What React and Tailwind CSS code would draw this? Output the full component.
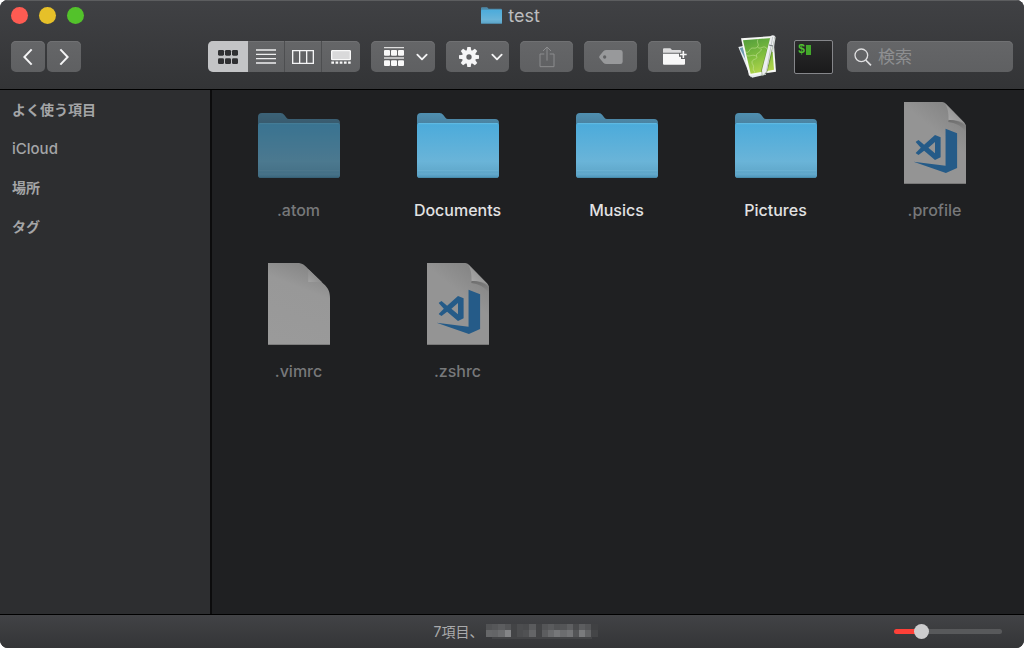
import React from 'react'

const FONT = "font-['Inter','Noto_Sans_CJK_JP',sans-serif]"

function FolderIcon({ className }) {
  return (
    <svg viewBox="0 0 246 195" className={className} aria-hidden="true">
      <defs>
        <linearGradient id="folderFront" x1="0" y1="0" x2="0" y2="1">
          <stop offset="0" stopColor="#4babdb" />
          <stop offset="0.7" stopColor="#6ab4d8" />
          <stop offset="0.86" stopColor="#62aacd" />
          <stop offset="1" stopColor="#559dc1" />
        </linearGradient>
        <linearGradient id="folderBack" x1="0" y1="0" x2="0" y2="1">
          <stop offset="0" stopColor="#4f8fb0" />
          <stop offset="0.3" stopColor="#4a83a2" />
        </linearGradient>
      </defs>
      <path d="M0 12Q0 0 12 0H68Q75 0 79 6L86 15Q88 18 93 18H234Q246 18 246 30V100H0Z" fill="url(#folderBack)" />
      <path d="M0 38Q0 30 8 30H238Q246 30 246 38V187Q246 195 238 195H8Q0 195 0 187Z" fill="url(#folderFront)" />
      <path d="M4 32H242" stroke="#62bce4" strokeWidth="3" />
      <path d="M2 173H244M2 183H244" stroke="#7fc0de" strokeWidth="2" opacity="0.55" />
      <path d="M4 193H242" stroke="#4788a8" strokeWidth="3" />
    </svg>
  )
}

function PlainFile() {
  return (
    <svg viewBox="0 0 188 246" className="h-[82px] w-[62px]" preserveAspectRatio="none" aria-hidden="true">
      <defs>
        <linearGradient id="plainFold" x1="0" y1="1" x2="0.6" y2="0.3">
          <stop offset="0" stopColor="#a3a3a3" />
          <stop offset="1" stopColor="#878787" />
        </linearGradient>
        <linearGradient id="paperPlain" x1="0.3" y1="1" x2="0.6" y2="0">
          <stop offset="0" stopColor="#9a9a9a" />
          <stop offset="0.7" stopColor="#989898" />
          <stop offset="1" stopColor="#858585" />
        </linearGradient>
      </defs>
      <path d="M0 0H88C106 0 113 8 122 18L168 62C183 75 188 86 188 106V246H0Z" fill="url(#paperPlain)" />
      <path d="M122 18V57H163Z" fill="url(#plainFold)" />
      <path d="M0 244.500H188" stroke="#7d7d7d" strokeWidth="3" />
    </svg>
  )
}

function CodeFile() {
  return (
    <svg viewBox="0 0 188 246" className="h-[82px] w-[62px]" preserveAspectRatio="none" aria-hidden="true">
      <defs>
        <linearGradient id="codeFold" x1="0" y1="1" x2="0.7" y2="0.3">
          <stop offset="0" stopColor="#b0b0b0" />
          <stop offset="1" stopColor="#909090" />
        </linearGradient>
        <linearGradient id="foldShade" x1="0.4" y1="0" x2="0.6" y2="1">
          <stop offset="0" stopColor="#6e6e6e" />
          <stop offset="1" stopColor="#6e6e6e" stopOpacity="0" />
        </linearGradient>
        <linearGradient id="paperCode" x1="0" y1="1" x2="0.6" y2="0">
          <stop offset="0" stopColor="#949494" />
          <stop offset="0.7" stopColor="#949494" />
          <stop offset="1" stopColor="#868686" />
        </linearGradient>
      </defs>
      <path d="M0 0H116Q122 0 128 6L182 61Q188 67 188 76V246H0Z" fill="url(#paperCode)" />
      <path d="M136 52C155 54 176 60 188 74V92C176 72 155 62 134 60Z" fill="url(#foldShade)" />
      <path d="M122 2C133 14 136 34 135 54C155 53 174 56 186 66Z" fill="url(#codeFold)" />
      <path d="M0 244.500H188" stroke="#787878" strokeWidth="3" />
      <path d="M126 80L161 94V198L127 213L29 179L126 191Z" fill="#255b88" />
      <path
        fillRule="evenodd"
        d="M94 99L111 106V166L94 174L61 146L44 159L36 154V152L51 137L36 121V119L44 114L61 128ZM94 120L74 137L94 154Z"
        fill="#255b88"
      />
    </svg>
  )
}

function Chevron() {
  return (
    <svg viewBox="0 0 36 24" className="h-2 w-3" aria-hidden="true">
      <path d="M4 5L18 19L32 5" fill="none" stroke="#f4f4f5" strokeWidth="5.500" strokeLinecap="round" strokeLinejoin="round" />
    </svg>
  )
}

function GridIcon() {
  return (
    <svg viewBox="0 0 60 42" className="h-[14px] w-5" fill="#2f3032" aria-hidden="true">
      {[0, 21, 42].map((x) => [0, 25].map((y) => <rect key={`${x}-${y}`} x={x} y={y} width="18" height="17" rx="4" />))}
    </svg>
  )
}

function ListIcon() {
  return (
    <svg viewBox="0 0 60 45" className="h-[15px] w-5" aria-hidden="true">
      <path d="M0 3H60M0 16H60M0 29H60M0 42H60" stroke="#eeeeef" strokeWidth="4" />
    </svg>
  )
}

function ColumnsIcon() {
  return (
    <svg viewBox="0 0 66 42" className="h-[14px] w-[22px]" aria-hidden="true">
      <path d="M2 2H64V40H2ZM23 2V40M44 2V40" fill="none" stroke="#f4f4f5" strokeWidth="4" />
    </svg>
  )
}

function GalleryIcon() {
  return (
    <svg viewBox="0 0 60 42" className="h-[14px] w-5" aria-hidden="true">
      <rect x="2" y="2" width="56" height="27" rx="2" fill="#d9d9da" stroke="#f8f8f8" strokeWidth="4" />
      <path d="M1 38H59" stroke="#f8f8f8" strokeWidth="7" strokeDasharray="8 4.600" />
    </svg>
  )
}

function GroupIcon() {
  return (
    <svg viewBox="0 0 60 57" className="h-[19px] w-5" fill="#f8f8f8" aria-hidden="true">
      <path d="M0 2H60M0 33H60" stroke="#dedede" strokeWidth="4" />
      {[0, 21, 42].map((x) => [9, 40].map((y) => <rect key={`${x}-${y}`} x={x} y={y} width="18" height="17" rx="3" />))}
    </svg>
  )
}

function GearIcon() {
  const teeth = [0, 45, 90, 135, 180, 225, 270, 315]
  return (
    <svg viewBox="-30 -30 60 60" className="size-5" aria-hidden="true">
      {teeth.map((a) => (
        <path key={a} d="M-7 -18L-5 -30H5L7 -18Z" fill="#f6f6f7" transform={`rotate(${a})`} />
      ))}
      <circle r="14.500" fill="none" stroke="#f6f6f7" strokeWidth="13" />
    </svg>
  )
}

function ShareIcon() {
  return (
    <svg viewBox="0 0 48 66" className="h-[22px] w-4" fill="none" stroke="#8b8c8e" strokeWidth="3" aria-hidden="true">
      <path d="M16 24H3V62H45V24H32M24 44V4M12 15L24 3L36 15" />
    </svg>
  )
}

function TagIcon() {
  return (
    <svg viewBox="0 0 72 42" className="h-[14px] w-6" aria-hidden="true">
      <path
        fillRule="evenodd"
        d="M22 0H64Q71 0 71 7V35Q71 42 64 42H22Q17 42 13 38L2 25Q-1 21 2 17L13 4Q17 0 22 0ZM17 16A5 5 0 1 0 17 26A5 5 0 1 0 17 16Z"
        fill="#98999b"
      />
    </svg>
  )
}

function NewFolderIcon() {
  return (
    <svg viewBox="0 0 72 51" className="h-[17px] w-6" aria-hidden="true">
      <path d="M0 14V4Q0 1 3 1H22L27 6H52Q55 6 55 9V14Z" fill="#dcdcdd" />
      <path d="M0 17H48V26H54V33H66V47Q66 50 63 50H3Q0 50 0 47Z" fill="#f8f8f8" />
      <path d="M61 6V33M48 19.500H72" stroke="#626365" strokeWidth="9" />
      <path d="M61 9V30M51 19.500H71" stroke="#f8f8f8" strokeWidth="5" />
    </svg>
  )
}

function EditorAppIcon() {
  return (
    <svg viewBox="0 0 117 129" className="h-[43px] w-[39px]" aria-hidden="true">
      <defs>
        <linearGradient id="leaf" x1="0.3" y1="0" x2="0.6" y2="1">
          <stop offset="0" stopColor="#56a03c" />
          <stop offset="0.5" stopColor="#7fbd3e" />
          <stop offset="1" stopColor="#b4d64c" />
        </linearGradient>
      </defs>
      <path d="M1 36L18 32L49 120L38 127Z" fill="#e6ebee" />
      <path d="M5 40L15 37L30 88Z" fill="#6f9bb0" />
      <path d="M36 118L80 110L84 119L42 128Z" fill="#e6ebee" />
      <path d="M9 10L106 3L114 110L33 122Z" fill="#f7f8f5" />
      <path d="M15 16L101 9L108 104L38 116Z" fill="url(#leaf)" />
      <path
        d="M60 13C54 24 66 28 58 36C50 44 42 34 36 44C32 52 28 54 22 50M58 36C70 46 74 30 84 38C92 44 88 52 98 50M70 42C68 56 52 52 56 64C60 74 46 70 42 80C40 88 50 90 46 100C44 108 52 108 50 113M56 64C44 56 36 66 27 62"
        fill="none"
        stroke="#c9e59c"
        strokeWidth="2"
        opacity="0.85"
      />
      <path d="M97 8L114 8L88 112L72 125L69 106Z" fill="#45602f" opacity="0.45" />
      <path d="M98 3Q104 -1 111 3L86 108L74 123L72 106Z" fill="#eceeef" />
      <path d="M104 6L86 106" stroke="#c3c8cb" strokeWidth="3" />
      <path d="M110 4L113 6L106 50L101 52Z" fill="#d5d8da" />
      <path d="M93 30L105 33" stroke="#70777a" strokeWidth="3" />
    </svg>
  )
}

const control =
  'flex h-[31px] shrink-0 items-center rounded-[5px] bg-linear-to-b from-[#656668] to-[#5f6062] shadow-[inset_0_1px_0_#707173]'

const viewModes = [
  { label: 'アイコン表示', Icon: GridIcon, style: 'w-10 bg-[#c3c4c6]' },
  { label: 'リスト表示', Icon: ListIcon, style: 'w-9' },
  { label: 'カラム表示', Icon: ColumnsIcon, style: 'w-[37px] border-l border-[#4d4e50]' },
  { label: 'ギャラリー表示', Icon: GalleryIcon, style: 'w-[39px] border-l border-[#4d4e50]' },
]

const files = [
  { name: '.atom', kind: 'folder', hidden: true },
  { name: 'Documents', kind: 'folder' },
  { name: 'Musics', kind: 'folder' },
  { name: 'Pictures', kind: 'folder' },
  { name: '.profile', kind: 'code', hidden: true },
  { name: '.vimrc', kind: 'plain', hidden: true },
  { name: '.zshrc', kind: 'code', hidden: true },
]

const mosaic = [
  ['#525355', '#565759', '#5c5d5f', '#545557', '#434446', '#4c4d4f', '#4a4b4d', '#5a5b5d', '#434446', '#545557', '#5a5b5d', '#525355', '#545557', '#5e5f61', '#4a4b4d', '#5c5d5f', '#545557', '#404143'],
  ['#666769', '#646567', '#6c6d6f', '#848587', '#434446', '#4c4d4f', '#505153', '#646567', '#434446', '#5c5d5f', '#6a6b6d', '#767779', '#6c6d6f', '#747577', '#545557', '#7a7b7d', '#626365', '#444547'],
]

function Header() {
  return (
    <header className="shrink-0 border-b border-black bg-linear-to-b from-[#404144] to-[#333436] pb-3 shadow-[inset_0_1px_0_#5c5d5f]">
      <div className="grid h-8 grid-cols-[1fr_auto_1fr] items-center px-[11px]">
        <div className="flex gap-[11px] pb-px">
          <button aria-label="閉じる" className="size-[17px] rounded-full bg-[#fe5b52]" />
          <button aria-label="しまう" className="size-[17px] rounded-full bg-[#e6c029]" />
          <button aria-label="拡大" className="size-[17px] rounded-full bg-[#53c22b]" />
        </div>
        <h1 className="flex items-center gap-[6px] pr-[3px] text-[18px] leading-6 text-[#bcbdbf]">
          <FolderIcon className="mb-[2px] h-[17px] w-[21px]" />
          test
        </h1>
      </div>
      <div className="mt-1 flex h-[41px] items-center px-[11px]">
        <nav className="flex gap-[2px]" aria-label="移動">
          <button aria-label="戻る" className={`${control} w-[34px] justify-center`}>
            <svg viewBox="0 0 30 54" className="h-[18px] w-[10px]" aria-hidden="true">
              <path d="M26 4L4 27L26 50" fill="none" stroke="#f4f4f5" strokeWidth="6" />
            </svg>
          </button>
          <button aria-label="進む" className={`${control} w-[34px] justify-center`}>
            <svg viewBox="0 0 30 54" className="h-[18px] w-[10px]" aria-hidden="true">
              <path d="M4 4L26 27L4 50" fill="none" stroke="#f4f4f5" strokeWidth="6" />
            </svg>
          </button>
        </nav>
        <div className="ml-[127px] flex shrink-0 gap-[11px]">
          <div className={`${control} overflow-hidden`} role="group" aria-label="表示">
            {viewModes.map(({ label, Icon, style }) => (
              <button key={label} aria-label={label} className={`flex h-full items-center justify-center ${style}`}>
                <Icon />
              </button>
            ))}
          </div>
          <button aria-label="グループ" aria-haspopup="menu" className={`${control} w-16 gap-3 pl-[13px]`}>
            <GroupIcon />
            <Chevron />
          </button>
          <button aria-label="操作" aria-haspopup="menu" className={`${control} w-[63px] gap-3 pl-[13px]`}>
            <GearIcon />
            <Chevron />
          </button>
          <button aria-label="共有" className={`${control} w-[53px] justify-center`}>
            <ShareIcon />
          </button>
          <button aria-label="タグを編集" className={`${control} w-[53px] justify-center`}>
            <TagIcon />
          </button>
          <button aria-label="新規フォルダ" className={`${control} w-[53px] justify-center`}>
            <NewFolderIcon />
          </button>
        </div>
        <button aria-label="エディタ" className="ml-[37px] shrink-0">
          <EditorAppIcon />
        </button>
        <button
          aria-label="ターミナル"
          className="ml-[17px] flex h-[34px] w-[39px] shrink-0 items-start gap-px rounded-[2px] border border-[#85868a] bg-linear-to-b from-[#2b2b2c] to-[#1a1a1b] pt-1 pl-[3px] font-['Liberation_Mono',monospace] text-[12px] leading-[11px] font-bold text-[#4fc030]"
        >
          $<span className="h-[10px] w-[5px] bg-[#43a82b]" />
        </button>
        <label className={`${control} ml-[14px] min-w-0 flex-1 gap-[6px] pl-[7px]`}>
          <svg viewBox="0 0 54 54" className="size-[18px] shrink-0" fill="none" stroke="#dfdfe0" aria-hidden="true">
            <circle cx="22" cy="22" r="19" strokeWidth="4" />
            <path d="M35 36L51 52" strokeWidth="5" />
          </svg>
          <input
            type="search"
            aria-label="検索"
            placeholder="検索"
            className="w-full min-w-0 bg-transparent text-[17px] leading-6 text-white outline-none placeholder:text-[#8e8f91]"
          />
        </label>
      </div>
    </header>
  )
}

export default function App() {
  return (
    <div className={`flex h-screen flex-col overflow-hidden rounded-lg bg-[#1f2022] ${FONT}`}>
      <Header />
      <div className="flex min-h-0 flex-1">
        <aside className="w-[212px] shrink-0 border-r-2 border-[#0c0c0d] bg-[#2d2e30] px-3">
          <ul className="text-[14px] text-[#a4a5a7]">
            {['よく使う項目', 'iCloud', '場所', 'タグ'].map((item) => (
              <li key={item} className="flex h-[39px] items-center">
                <span className={item === 'iCloud' ? 'text-[15px] leading-5 font-medium' : 'leading-5 font-semibold'}>
                  {item}
                </span>
              </li>
            ))}
          </ul>
        </aside>
        <main className="min-w-0 flex-1 overflow-hidden pt-3 pr-[10px] pl-[7px]">
          <ul className="grid grid-cols-5 gap-y-[41px]">
            {files.map(({ name, kind, hidden }) => (
              <li key={name} className="flex flex-col items-center">
                <div className={`flex h-[82px] items-center ${hidden && kind === 'folder' ? 'opacity-60' : ''}`}>
                  {kind === 'folder' && <FolderIcon className="mt-[5px] h-[65px] w-[82px]" />}
                  {kind === 'code' && <CodeFile />}
                  {kind === 'plain' && <PlainFile />}
                </div>
                <span
                  className={`mt-[14px] text-[16px] leading-6 font-medium ${hidden ? 'text-[#77787a]' : 'text-[#e2e2e3]'}`}
                >
                  {name}
                </span>
              </li>
            ))}
          </ul>
        </main>
      </div>
      <footer className="grid h-[34px] shrink-0 grid-cols-[1fr_auto_1fr] items-center border-t border-black bg-linear-to-b from-[#424346] to-[#343537] pr-[22px] pl-[30px]">
        <p className="col-start-2 flex items-center gap-[3px] text-[14px] leading-5 text-[#a9aaac]">
          7項目、
          <svg viewBox="0 0 112 15" className="h-[15px] w-[112px]" shapeRendering="crispEdges" aria-hidden="true">
            {mosaic.map((row, y) =>
              row.map((fill, x) => <rect key={`${x}-${y}`} x={x * 6.2} y={y * 6} width="6.200" height="7" fill={fill} />),
            )}
            <rect y="13" x="6" width="100" height="2" fill="#434446" />
          </svg>
        </p>
        <input
          type="range"
          aria-label="アイコンサイズ"
          min="0"
          max="100"
          defaultValue="21"
          className="h-[15px] w-[108px] appearance-none justify-self-end bg-transparent [&::-webkit-slider-runnable-track]:h-[5px] [&::-webkit-slider-runnable-track]:rounded-full [&::-webkit-slider-runnable-track]:bg-[linear-gradient(to_right,#fe4038_24%,#58595b_24%)] [&::-webkit-slider-thumb]:-mt-[5px] [&::-webkit-slider-thumb]:size-[15px] [&::-webkit-slider-thumb]:appearance-none [&::-webkit-slider-thumb]:rounded-full [&::-webkit-slider-thumb]:bg-[#cccccd]"
        />
      </footer>
    </div>
  )
}
